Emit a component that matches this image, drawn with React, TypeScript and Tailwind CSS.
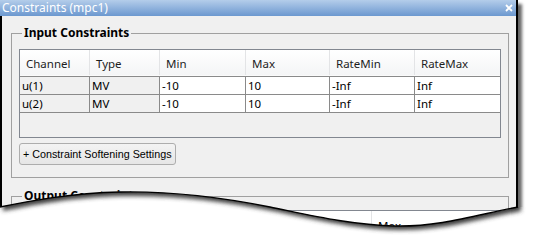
import React from 'react';

const columns = [
  { key: 'channel', label: 'Channel', w: 'w-[70px]', gray: true },
  { key: 'type', label: 'Type', w: 'w-[70px]', gray: true },
  { key: 'min', label: 'Min', w: 'w-[86px]', gray: false },
  { key: 'max', label: 'Max', w: 'w-[84px]', gray: false },
  { key: 'rateMin', label: 'RateMin', w: 'w-[85px]', gray: false },
  { key: 'rateMax', label: 'RateMax', w: 'w-[85px]', gray: false },
];

const rows: Record<string, string>[] = [
  { channel: 'u(1)', type: 'MV', min: '-10', max: '10', rateMin: '-Inf', rateMax: 'Inf' },
  { channel: 'u(2)', type: 'MV', min: '-10', max: '10', rateMin: '-Inf', rateMax: 'Inf' },
];

// torn paper edge along the bottom
const CURVE = 'C30,201 70,193 120,192 C170,191 220,197 270,207 C305,214 350,225 395,226 C440,227 480,214 518,207';
const ABOVE = `M0,-10 L0,207 ${CURVE} L518,-10 Z`;
const BELOW = `M-10,207 L0,207 ${CURVE} L540,207 L540,250 L-10,250 Z`;

const TornEdge: React.FC = () => (
  <svg className="absolute inset-0 pointer-events-none" width="533" height="242" viewBox="0 0 533 242">
    <defs>
      <clipPath id="below">
        <path d={BELOW} />
      </clipPath>
      <filter id="soft" x="-10%" y="-10%" width="120%" height="120%">
        <feGaussianBlur stdDeviation="2" />
      </filter>
    </defs>
    <path d={BELOW} fill="#ffffff" />
    <g clipPath="url(#below)">
      <path d={ABOVE} transform="translate(3,4)" fill="#3c3c3c" filter="url(#soft)" />
    </g>
    <path d={`M0,207 ${CURVE}`} fill="none" stroke="#000000" strokeWidth="1.4" />
  </svg>
);

const ui = { fontFamily: '"Noto Sans", "Open Sans", sans-serif' };
const tahoma = { fontFamily: '"Liberation Sans", Arial, sans-serif' };

export default function App() {
  return (
    <div className="relative w-[533px] h-[242px] bg-white overflow-hidden" style={ui}>
      <div className="w-[518px] h-[242px] flex flex-col border-r-2 border-black bg-[#f0f0f0] shadow-[4px_4px_3px_rgba(0,0,0,0.6)]">
        <div className="h-[16px] shrink-0 flex items-center justify-between pl-[2px] pr-[3px] bg-gradient-to-b from-[#b4cdea] to-[#6c98cf]">
          <span className="text-[12px] leading-[16px] whitespace-nowrap text-white">Constraints (mpc1)</span>
          <svg width="8" height="8" viewBox="0 0 8 8">
            <path d="M1,1 L7,7 M7,1 L1,7" stroke="#ffffff" strokeWidth="1.8" />
          </svg>
        </div>

        <div className="flex-1 flex flex-col border-l-2 border-black pl-[9px] pr-[7px] pt-[10px]">
          <fieldset className="border border-[#a0a0a0] px-[7px] pt-[9px] pb-[12px]">
            <legend className="ml-[3px] px-[2px] text-[12px] font-bold leading-[14px] text-black whitespace-nowrap">
              Input Constraints
            </legend>
            <div className="h-[89px] border border-[#828790] bg-[#f0f0f0] text-[11.5px] text-black">
              <div className="flex h-[26px] bg-gradient-to-b from-white to-[#f4f5f6] border-b border-[#fafafa]">
                {columns.map((c, i) => (
                  <div
                    key={c.key}
                    className={`${c.w} flex items-center pl-[6px] pt-[3px] text-[#1e1e1e] ${i < 5 ? 'border-r border-[#e3e4e6]' : ''}`}
                  >
                    {c.label}
                  </div>
                ))}
              </div>
              {rows.map((r, ri) => (
                <div key={ri} className="flex h-[18px] border-t border-[#8a8a8a]">
                  {columns.map((c, i) => (
                    <div
                      key={c.key}
                      className={`${c.w} flex items-center pl-[2px] ${c.gray ? 'bg-[#f0f0f0]' : 'bg-white'} ${i < 5 ? 'border-r border-[#8a8a8a]' : ''}`}
                    >
                      {r[c.key]}
                    </div>
                  ))}
                </div>
              ))}
              <div className="border-t border-[#8a8a8a]" />
            </div>
            <button
              className="mt-[5px] h-[22px] w-[157px] rounded-[3px] border border-[#adadad] bg-gradient-to-b from-[#f3f3f3] to-[#e6e6e6] pl-[3px] text-left text-[10.75px] whitespace-nowrap text-black"
              style={tahoma}
            >
              + Constraint Softening Settings
            </button>
          </fieldset>

          <fieldset className="mt-[11px] flex-1 border border-[#a0a0a0] px-[7px] pt-[7px]">
            <legend className="ml-[3px] px-[2px] text-[12px] font-bold leading-[14px] text-black whitespace-nowrap">
              Output Constraints
            </legend>
            <div className="h-[40px] border border-[#828790] bg-white text-[11.5px]">
              <div className="flex h-[26px]">
                <div className="w-[352px] border-r border-[#e3e4e6]" />
                <div className="pl-[6px] pt-[6px]">Max</div>
              </div>
            </div>
          </fieldset>
        </div>
      </div>
      <TornEdge />
    </div>
  );
}
